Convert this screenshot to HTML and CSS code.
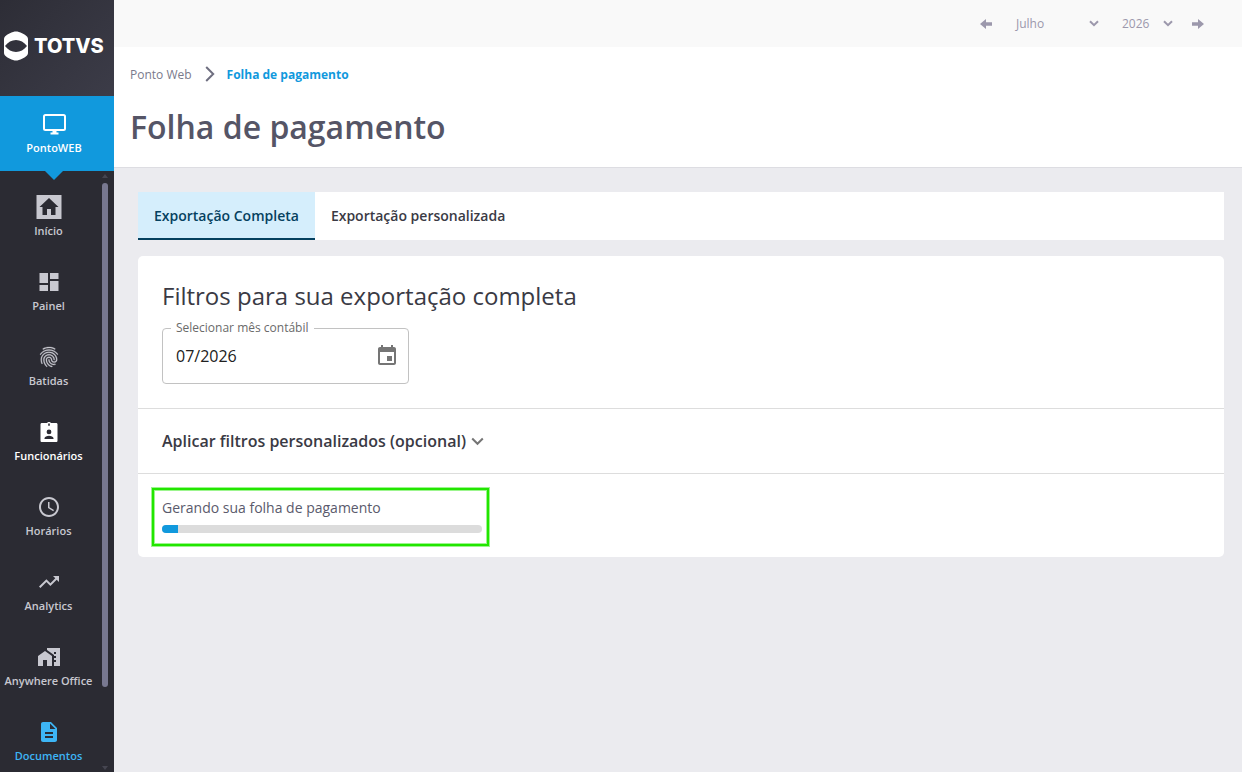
FILE: index.html
```html
<!DOCTYPE html>
<html lang="pt-BR">
<head>
    <meta charset="UTF-8">
    <meta name="viewport" content="width=device-width, initial-scale=1.0">
    <title>Folha de pagamento</title>
    <link rel="stylesheet" href="styles.css">
</head>
<body>
    <!-- Sidebar -->
    <aside class="sidebar">
        <div class="logo">
            <svg width="24" height="30" viewBox="0 0 24 30">
                <path fill="#fff" fill-rule="evenodd" d="M12 .5c3.500 0 9 2.800 11 5 .7.8 1 1.500 1 2.500v14c0 1-.3 1.700-1 2.500-2 2.200-7.500 5-11 5s-9-2.800-11-5c-.7-.8-1-1.500-1-2.500V8c0-1 .3-1.700 1-2.500 2-2.200 7.500-5 11-5zM1 15c3 3.800 6.700 6 11 6s8-2.200 11-6C20 11.200 16.300 9 12 9S4 11.200 1 15z"/>
            </svg>
            <span class="logo-name">TOTVS</span>
        </div>

        <a class="module">
            <svg width="24" height="22" viewBox="0 0 24 22">
                <rect x="2" y="1" width="21" height="15" rx="1.500" fill="none" stroke="#fff" stroke-width="2"/>
                <path fill="#fff" d="M10.500 17h4v1.500h2v2h-8v-2h2z"/>
            </svg>
            <span>PontoWEB</span>
        </a>

        <div class="menu-wrap">
            <nav class="menu">
                <a class="menu-item">
                    <svg viewBox="0 0 24 24">
                        <path fill-rule="evenodd" d="M-.5 0h25v24h-25zM12 3l-9.500 9h3v8h4.500v-6h4v6h4.500v-8h3z"/>
                    </svg>
                    <span>Início</span>
                </a>
                <a class="menu-item">
                    <svg viewBox="0 0 24 24"><path d="M2.500 13h8.500V3H2.500v10zm0 8h8.500v-6H2.500v6zm10.500 0h8.500V11H13v10zm0-18v6h8.500V3H13z"/></svg>
                    <span>Painel</span>
                </a>
                <a class="menu-item">
                    <svg viewBox="0 0 24 24"><path d="M17.810 4.470c-.08 0-.16-.02-.23-.06C15.660 3.420 14 3 12.010 3c-1.980 0-3.860.47-5.570 1.410-.24.13-.54.04-.68-.2-.13-.24-.04-.55.2-.68C7.820 2.520 9.860 2 12.010 2c2.130 0 3.990.47 6.030 1.520.25.13.34.43.21.67-.09.18-.26.28-.44.28zM3.500 9.720c-.1 0-.2-.03-.29-.09-.23-.16-.28-.47-.12-.7.99-1.400 2.250-2.500 3.750-3.270C9.980 4.040 14 4.030 17.150 5.650c1.500.77 2.760 1.860 3.750 3.250.16.22.11.54-.12.7-.23.16-.54.11-.7-.12-.9-1.260-2.040-2.250-3.390-2.940-2.870-1.470-6.540-1.470-9.400.01-1.360.7-2.500 1.700-3.400 2.960-.08.14-.23.21-.39.21zm6.250 12.070c-.13 0-.26-.05-.35-.15-.87-.87-1.340-1.430-2.010-2.640-.69-1.230-1.050-2.730-1.050-4.340 0-2.970 2.540-5.390 5.660-5.390s5.660 2.420 5.660 5.390c0 .28-.22.5-.5.5s-.5-.22-.5-.5c0-2.420-2.090-4.390-4.660-4.390-2.570 0-4.660 1.970-4.660 4.390 0 1.440.32 2.770.93 3.850.64 1.150 1.080 1.640 1.850 2.420.19.2.19.51 0 .71-.11.1-.24.15-.37.15zm7.170-1.850c-1.190 0-2.240-.3-3.100-.89-1.490-1.010-2.380-2.650-2.380-4.390 0-.28.22-.5.5-.5s.5.22.5.5c0 1.410.72 2.740 1.940 3.560.71.48 1.540.71 2.540.71.24 0 .64-.03 1.040-.1.27-.05.53.13.58.41.05.27-.13.53-.41.58-.57.11-1.070.12-1.210.12zM14.910 22c-.04 0-.09-.01-.13-.02-1.590-.44-2.630-1.030-3.720-2.100-1.400-1.390-2.170-3.240-2.170-5.220 0-1.620 1.380-2.940 3.080-2.940 1.700 0 3.080 1.320 3.080 2.940 0 1.070.93 1.940 2.080 1.940s2.080-.87 2.080-1.940c0-3.770-3.250-6.830-7.250-6.830-2.840 0-5.440 1.580-6.610 4.030-.39.81-.59 1.760-.59 2.800 0 .78.07 2.010.67 3.610.1.26-.03.55-.29.64-.26.1-.55-.04-.64-.29-.49-1.310-.73-2.610-.73-3.960 0-1.200.23-2.290.68-3.240 1.330-2.790 4.280-4.600 7.510-4.600 4.550 0 8.250 3.510 8.250 7.830 0 1.620-1.380 2.940-3.080 2.940s-3.080-1.320-3.080-2.940c0-1.070-.93-1.940-2.080-1.940s-2.080.87-2.080 1.940c0 1.710.66 3.310 1.870 4.510.95.94 1.860 1.460 3.270 1.850.27.07.42.35.35.61-.05.23-.26.38-.47.38z" stroke="currentColor" stroke-width=".3"/></svg>
                    <span>Batidas</span>
                </a>
                <a class="menu-item current">
                    <svg viewBox="0 0 24 24">
                        <path fill-rule="evenodd" d="M5 3h5.200c.2-.7.8-1 1.800-1s1.600.3 1.800 1H19c1 0 1.500.5 1.500 1.500v16c0 1-.5 1.500-1.500 1.500H5c-1 0-1.500-.5-1.500-1.500v-16C3.500 3.500 4 3 5 3zM11.200 3.500v2.200h1.600V3.500zM12 9.500a2.400 2.400 0 1 0 0 4.800 2.400 2.400 0 0 0 0-4.800zM7.500 19h9v-.8c0-1.400-2.500-2.400-4.500-2.400s-4.500 1-4.500 2.400z"/>
                    </svg>
                    <span>Funcionários</span>
                </a>
                <a class="menu-item">
                    <svg viewBox="0 0 24 24"><path d="M11.990 2C6.470 2 2 6.480 2 12s4.470 10 9.990 10C17.520 22 22 17.520 22 12S17.520 2 11.990 2zM12 20c-4.420 0-8-3.580-8-8s3.580-8 8-8 8 3.580 8 8-3.580 8-8 8zm.5-13H11v6l5.250 3.150.75-1.230-4.500-2.670z"/></svg>
                    <span>Horários</span>
                </a>
                <a class="menu-item">
                    <svg viewBox="0 0 24 24"><path d="M16 6l2.290 2.290-4.880 4.880-4-4L2 16.590 3.410 18l6-6 4 4 6.300-6.290L22 12V6z"/></svg>
                    <span>Analytics</span>
                </a>
                <a class="menu-item">
                    <svg viewBox="0 0 24 24"><path d="M1 11v10h5v-6h4v6h5V11L8 6z"/><path d="M10 3v1.970l7 5V11h2v2h-2v2h2v2h-2v4h6V3H10zm9 6h-2V7h2v2z"/></svg>
                    <span>Anywhere Office</span>
                </a>
                <a class="menu-item active">
                    <svg viewBox="0 0 24 24"><path d="M14 2H6c-1.100 0-1.990.9-1.990 2L4 20c0 1.100.89 2 1.990 2H18c1.100 0 2-.9 2-2V8l-6-6zm2 16H8v-2h8v2zm0-4H8v-2h8v2zm-3-5V3.500L18.500 9H13z"/></svg>
                    <span>Documentos</span>
                </a>
            </nav>
            <div class="scrollbar">
                <span class="arrow-up"></span>
                <span class="thumb"></span>
                <span class="arrow-down"></span>
            </div>
        </div>
    </aside>

    <div class="page">
        <!-- Period selector -->
        <div class="topbar">
            <svg class="arrow" viewBox="0 0 12 10"><path d="M0 5l6-5v3.300h6v3.400H6V10z"/></svg>
            <div class="select month">
                <span>Julho</span>
                <svg class="chevron" viewBox="0 0 10 7"><path d="M1 1.200l4 4 4-4"/></svg>
            </div>
            <div class="select year">
                <span>2026</span>
                <svg class="chevron" viewBox="0 0 10 7"><path d="M1 1.200l4 4 4-4"/></svg>
            </div>
            <svg class="arrow" viewBox="0 0 12 10"><path d="M12 5L6 0v3.300H0v3.400h6V10z"/></svg>
        </div>

        <header class="page-header">
            <div class="breadcrumb">
                <span>Ponto Web</span>
                <svg width="10" height="16" viewBox="0 0 10 16"><path d="M1.200 1l7 7-7 7" fill="none" stroke="#6f6f80" stroke-width="2"/></svg>
                <strong>Folha de pagamento</strong>
            </div>
            <h1>Folha de pagamento</h1>
        </header>

        <main class="content">
            <div class="tabs">
                <a class="tab selected">Exportação Completa</a>
                <a class="tab">Exportação personalizada</a>
            </div>

            <div class="card">
                <section class="filters">
                    <h2>Filtros para sua exportação completa</h2>
                    <fieldset class="field">
                        <legend>Selecionar mês contábil</legend>
                        <span>07/2026</span>
                        <svg width="24" height="24" viewBox="0 0 24 24"><path fill="#757575" d="M17 12h-5v5h5v-5zM16 1v2H8V1H6v2H5c-1.110 0-1.990.9-1.990 2L3 19c0 1.100.89 2 2 2h14c1.100 0 2-.9 2-2V5c0-1.100-.9-2-2-2h-1V1h-2zm3 18H5V8h14v11z"/></svg>
                    </fieldset>
                </section>

                <section class="custom-filters">
                    <span>Aplicar filtros personalizados (opcional)</span>
                    <svg width="13" height="9" viewBox="0 0 13 9"><path d="M1.200 1.500l5.300 5.300 5.300-5.300" fill="none" stroke="#757575" stroke-width="2"/></svg>
                </section>

                <section class="progress-row">
                    <div class="highlight">
                        <p>Gerando sua folha de pagamento</p>
                        <div class="progress">
                            <div class="progress-bar" style="width: 5%"></div>
                        </div>
                    </div>
                </section>
            </div>
        </main>
    </div>
</body>
</html>
```

FILE: styles.css
```css
* {
    box-sizing: border-box;
}

body {
    margin: 0;
    height: 100vh;
    display: flex;
    overflow: hidden;
    font-family: "Open Sans", "Noto Sans", sans-serif;
    background-color: #ebebef;
}

/* Sidebar */
.sidebar {
    width: 114px;
    flex: none;
    display: flex;
    flex-direction: column;
    background-color: #2b2b33;
}

.logo {
    height: 96px;
    flex: none;
    display: flex;
    align-items: center;
    gap: 6px;
    padding: 0 0 4px 4px;
    background: linear-gradient(135deg, #2d2d36, #3c3c48);
}

.logo-name {
    color: #fff;
    font-family: Inter, sans-serif;
    font-size: 20px;
    font-weight: 800;
}

.module {
    position: relative;
    height: 75px;
    flex: none;
    display: flex;
    flex-direction: column;
    align-items: center;
    padding: 18px 6px 0 0;
    gap: 4px;
    background-color: #1199dd;
    color: #fff;
    font-size: 11px;
    font-weight: 600;
    line-height: 16px;
}

.module::after {
    content: "";
    position: absolute;
    top: 75px;
    left: 45px;
    border: 9px solid transparent;
    border-top-color: #1199dd;
    border-bottom: none;
}

.menu-wrap {
    flex: 1;
    min-height: 0;
    display: flex;
    overflow: hidden;
}

.menu {
    width: 97px;
}

.menu-item {
    height: 75px;
    display: flex;
    flex-direction: column;
    align-items: center;
    gap: 4px;
    padding-top: 24px;
    color: #c8c8d0;
    font-size: 11px;
    font-weight: 600;
    line-height: 16px;
    white-space: nowrap;
}

.menu-item svg {
    width: 24px;
    height: 24px;
    overflow: visible;
    fill: currentColor;
}

.menu-item.current {
    color: #fff;
}

.menu-item.active {
    color: #3db5f5;
}

.scrollbar {
    width: 17px;
    display: flex;
    flex-direction: column;
    align-items: center;
    padding: 3px 1px 2px 0;
}

.arrow-up {
    border: 3px solid transparent;
    border-bottom: 4px solid #454550;
    border-top: none;
}

.thumb {
    width: 6px;
    height: 504px;
    margin-top: 5px;
    border-radius: 3px;
    background-color: #787890;
}

.arrow-down {
    margin-top: auto;
    border: 3px solid transparent;
    border-top: 4px solid #454550;
    border-bottom: none;
}

/* Page */
.page {
    flex: 1;
    min-width: 0;
}

.topbar {
    height: 47px;
    display: flex;
    justify-content: flex-end;
    align-items: center;
    padding-right: 38px;
    background-color: #f9f9f9;
    color: #9c98ac;
    font-size: 12px;
}

.arrow {
    width: 12px;
    height: 10px;
    fill: #9c98ac;
}

.select {
    display: flex;
    justify-content: space-between;
    align-items: center;
}

.month {
    width: 83px;
    margin: 0 23px 0 24px;
}

.year {
    width: 51px;
    margin-right: 19px;
}

.chevron {
    width: 10px;
    height: 7px;
    fill: none;
    stroke: #9c98ac;
    stroke-width: 2;
}

.page-header {
    height: 121px;
    padding: 17px 16px 0;
    background-color: #fff;
    border-bottom: 1px solid #dddde2;
}

.breadcrumb {
    display: flex;
    align-items: center;
    gap: 13px;
    height: 20px;
    color: #7a7a8c;
    font-size: 12px;
}

.breadcrumb strong {
    margin-left: -1px;
    color: #1199dd;
}

.page-header h1 {
    margin: 21px 0 0;
    color: #555566;
    font-size: 32px;
    font-weight: 600;
    line-height: 44px;
}

.content {
    padding: 24px 18px 0 24px;
}

.tabs {
    display: flex;
    height: 48px;
    margin-bottom: 16px;
    background-color: #fff;
}

.tab {
    padding: 0 16px;
    color: #3a3a44;
    font-size: 14px;
    font-weight: 600;
    line-height: 48px;
}

.tab.selected {
    background-color: #d5eefc;
    border-bottom: 2px solid #05415f;
    color: #05415f;
}

.card {
    background-color: #fff;
    border-radius: 5px;
}

.filters {
    height: 153px;
    padding: 23px 24px 0;
    border-bottom: 1px solid #dddddd;
}

.filters h2 {
    margin: 0;
    color: #3a3a44;
    font-size: 24px;
    font-weight: 400;
    line-height: 33px;
}

.field {
    display: flex;
    justify-content: space-between;
    align-items: center;
    width: 247px;
    height: 64px;
    margin: 8px 0 0;
    padding: 0 9px 7px 13px;
    border: 1px solid #c2c2c2;
    border-radius: 4px;
    color: #212121;
    font-size: 16px;
}

.field legend {
    margin-left: -5px;
    padding: 0 5px;
    color: #6a6a6a;
    font-size: 12px;
    line-height: 16px;
}

.custom-filters {
    height: 65px;
    display: flex;
    align-items: center;
    gap: 5px;
    padding-left: 24px;
    border-bottom: 1px solid #dddddd;
    color: #3a3a44;
    font-size: 16px;
    font-weight: 600;
}

.progress-row {
    height: 83px;
    padding: 14px 0 0 14px;
}

.highlight {
    width: 337px;
    height: 58px;
    padding: 8px 5px 0 8px;
    border: 2px solid #22e600;
    box-shadow: 0 0 0 1px #9cf58e, inset 0 0 0 1px #9cf58e;
}

.highlight p {
    margin: 0;
    color: #5a5a6c;
    font-size: 14px;
    line-height: 20px;
}

.progress {
    width: 320px;
    height: 8px;
    margin-top: 7px;
    border-radius: 4px;
    background-color: #dcdcdc;
    overflow: hidden;
}

.progress-bar {
    height: 8px;
    background-color: #1199dd;
}
```
